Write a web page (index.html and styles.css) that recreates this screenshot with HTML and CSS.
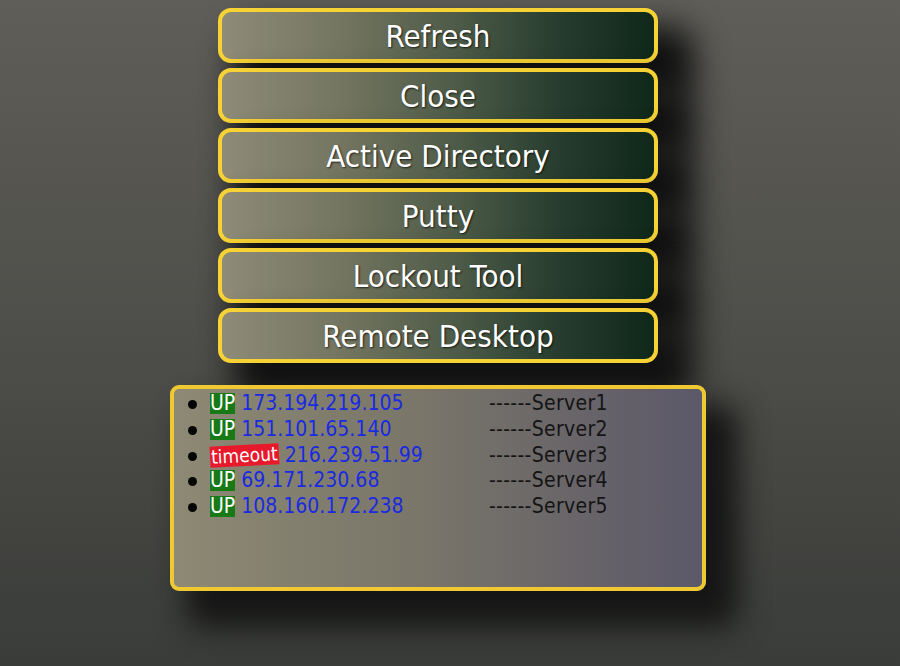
FILE: index.html
```html
<!DOCTYPE html>
<html>
<head>
<meta charset="utf-8">
<link rel="stylesheet" href="styles.css">
</head>
<body>
<div class="wrap">
  <div class="buttons">
    <button class="btn">Refresh</button>
    <button class="btn">Close</button>
    <button class="btn">Active Directory</button>
    <button class="btn">Putty</button>
    <button class="btn">Lockout Tool</button>
    <button class="btn">Remote Desktop</button>
  </div>
  <div class="panel">
    <ul class="servers">
      <li><span class="addr"><span class="badge up">UP</span> <span class="ip">173.194.219.105</span></span><span class="name">------Server1</span></li>
      <li><span class="addr"><span class="badge up">UP</span> <span class="ip">151.101.65.140</span></span><span class="name">------Server2</span></li>
      <li><span class="addr"><span class="badge timeout">timeout</span> <span class="ip">216.239.51.99</span></span><span class="name">------Server3</span></li>
      <li><span class="addr"><span class="badge up">UP</span> <span class="ip">69.171.230.68</span></span><span class="name">------Server4</span></li>
      <li><span class="addr"><span class="badge up">UP</span> <span class="ip">108.160.172.238</span></span><span class="name">------Server5</span></li>
    </ul>
  </div>
</div>
</body>
</html>
```
FILE: styles.css
```css
html, body {
  margin: 0;
  padding: 0;
}
body {
  width: 900px;
  height: 666px;
  overflow: hidden;
  background: linear-gradient(to bottom, #5f5e59 0%, #4e4e4a 50%, #3a3c39 100%);
  font-family: "DejaVu Sans Condensed", "DejaVu Sans", sans-serif;
  font-stretch: condensed;
}
.wrap {
  width: 876px;
  padding-top: 8px;
  display: flex;
  flex-direction: column;
  align-items: center;
}
.buttons {
  display: flex;
  flex-direction: column;
  gap: 5px;
}
.btn {
  width: 440px;
  height: 55px;
  box-sizing: border-box;
  border: 4px solid #f6d234;
  border-radius: 13px;
  background: linear-gradient(to right, #8e8b77 0%, #737560 28%, #4c5a47 55%, #243a2c 80%, #0f281a 100%);
  box-shadow: 26px 28px 32px 10px #121212;
  color: #ffffff;
  font-family: "DejaVu Sans Condensed", "DejaVu Sans", sans-serif;
  font-stretch: condensed;
  font-size: 31px;
  line-height: 1;
  padding: 2px 0 0;
  text-shadow: 1px 1px 2px rgba(0, 0, 0, 0.7);
  cursor: pointer;
}
.panel {
  margin-top: 22px;
  width: 536px;
  height: 206px;
  box-sizing: border-box;
  border: 4px solid #f0c832;
  border-radius: 9px;
  background: linear-gradient(to right, #8d8974 0%, #7a7669 45%, #5b5869 100%);
  box-shadow: 24px 28px 30px 8px #151615;
}
.servers {
  margin: 0;
  padding: 2px 0 0 36px;
  font-size: 21px;
  line-height: 25.8px;
  list-style: none;
  color: #111;
}
.servers li::before {
  content: "";
  display: inline-block;
  width: 9px;
  height: 9px;
  border-radius: 50%;
  background: #050505;
  margin-left: -22px;
  margin-right: 13px;
  vertical-align: 1px;
}
.addr {
  display: inline-block;
  width: 279px;
}
.badge {
  display: inline-block;
  color: #fff;
  line-height: 21px;
  padding: 0 1px;
}
.up {
  background: #177a17;
  padding: 0;
}
.timeout {
  background: #e8192b;
  font-size: 19px;
  transform: rotate(-3deg);
}
.ip {
  color: #1a2ae0;
}
.name {
  color: #141414;
  letter-spacing: 0.3px;
}
```
